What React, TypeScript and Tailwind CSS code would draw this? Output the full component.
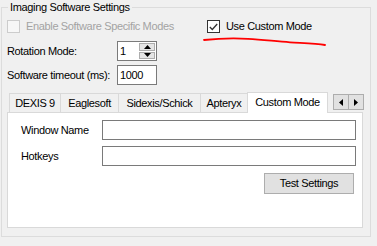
import React from "react";

const tabs = [
  { label: "DEXIS 9", w: "w-[51px]" },
  { label: "Eaglesoft", w: "w-[58px]" },
  { label: "Sidexis/Schick", w: "w-[82px]" },
  { label: "Apteryx", w: "w-[47px]" },
];

const Arrow = ({ dir }: { dir: "left" | "right" }) => (
  <div className="w-[16px] h-[16px] border border-[#adadad] bg-[#e1e1e1] flex items-center justify-center first:ml-0 -ml-[1px]">
    <svg width="4" height="7" viewBox="0 0 4 7">
      {dir === "left" ? (
        <polygon points="4,0 4,7 0,3.5" fill="#000" />
      ) : (
        <polygon points="0,0 0,7 4,3.5" fill="#000" />
      )}
    </svg>
  </div>
);

const App = () => {
  return (
    <div className="relative w-[377px] h-[246px] bg-[#f0f0f0] overflow-hidden font-['Liberation_Sans',Arial,sans-serif] text-[11px] tracking-[-0.35px] text-black whitespace-nowrap">
      <fieldset className="ml-[1px] w-[370px] h-[237px] border border-[#dcdcdc] pl-[5px]">
        <legend className="ml-[1px] px-[2px] leading-[14px]">Imaging Software Settings</legend>

        {/* checkboxes */}
        <div className="mt-[6px] h-[13px] flex items-center">
          <div className="w-[200px] shrink-0 flex items-center gap-[6px] text-[#a3a3a3]">
            <div className="w-[13px] h-[13px] border border-[#cccccc] bg-[#f7f7f7]" />
            <span>Enable Software Specific Modes</span>
          </div>
          <div className="flex items-center gap-[6px]">
            <div className="w-[13px] h-[13px] border border-[#333333] bg-white flex items-center justify-center">
              <svg width="9" height="8" viewBox="0 0 9 8">
                <polyline points="0.8,4 3.3,6.5 8.2,1" fill="none" stroke="#333" strokeWidth="1.3" />
              </svg>
            </div>
            <span>Use Custom Mode</span>
          </div>
        </div>

        {/* rotation mode */}
        <div className="mt-[8px] h-[20px] flex items-center">
          <span className="w-[110px] shrink-0">Rotation Mode:</span>
          <div className="w-[40px] h-[20px] border border-[#7a7a7a] bg-white flex items-center pl-[2px]">
            <span className="flex-1">1</span>
            <div className="w-[17px] h-[18px] flex flex-col gap-[1px] pr-[1px] py-[1px]">
              <div className="flex-1 bg-[#e5e5e5] border border-[#adadad] flex items-center justify-center">
                <svg width="7" height="4" viewBox="0 0 7 4"><polygon points="0,4 7,4 3.5,0" fill="#000" /></svg>
              </div>
              <div className="flex-1 bg-[#e5e5e5] border border-[#adadad] flex items-center justify-center">
                <svg width="7" height="4" viewBox="0 0 7 4"><polygon points="0,0 7,0 3.5,4" fill="#000" /></svg>
              </div>
            </div>
          </div>
        </div>

        {/* timeout */}
        <div className="mt-[4px] h-[20px] flex items-center">
          <span className="w-[110px] shrink-0">Software timeout (ms):</span>
          <div className="w-[40px] h-[20px] border border-[#7a7a7a] bg-white flex items-center pl-[2px]">
            1000
          </div>
        </div>

        {/* tab control */}
        <div className="mt-[7px] w-[357px]">
          <div className="h-[20px] flex items-end pl-[2px]">
            {tabs.map((t) => (
              <div
                key={t.label}
                className={`${t.w} h-[19px] border-l border-t border-[#d9d9d9] bg-[#f0f0f0] flex items-center justify-center`}
              >
                {t.label}
              </div>
            ))}
            <div className="relative z-10 w-[81px] h-[21px] -mb-[1px] border-l border-t border-r border-[#d9d9d9] bg-white flex items-center justify-center pb-[2px]">
              Custom Mode
            </div>
            <div className="ml-auto self-start mt-[2px] flex">
              <Arrow dir="left" />
              <Arrow dir="right" />
            </div>
          </div>
          <div className="w-[356px] h-[116px] border border-[#d9d9d9] bg-white pl-[13px] pt-[7px]">
            <div className="w-[335px] flex flex-col">
              <div className="h-[20px] flex items-center">
                <span className="w-[81px] shrink-0">Window Name</span>
                <div className="w-[254px] h-[20px] border border-[#7a7a7a] bg-white" />
              </div>
              <div className="mt-[6px] h-[20px] flex items-center">
                <span className="w-[81px] shrink-0">Hotkeys</span>
                <div className="w-[254px] h-[20px] border border-[#7a7a7a] bg-white" />
              </div>
              <div className="mt-[7px] flex justify-end pr-[2px]">
                <button className="w-[90px] h-[21px] border border-[#adadad] bg-[#e1e1e1] flex items-center justify-center">
                  Test Settings
                </button>
              </div>
            </div>
          </div>
        </div>
      </fieldset>

      {/* red annotation */}
      <svg
        className="absolute left-[200px] top-[34px]"
        width="130"
        height="14"
        viewBox="200 34 130 14"
      >
        <path
          d="M204 40 C 218 38.5, 232 38, 248 38.8 S 276 41.5, 290 42.3 S 316 43.2, 325 45"
          fill="none"
          stroke="#ff0000"
          strokeWidth="1.8"
          strokeLinecap="round"
        />
      </svg>
    </div>
  );
};

export default App;
